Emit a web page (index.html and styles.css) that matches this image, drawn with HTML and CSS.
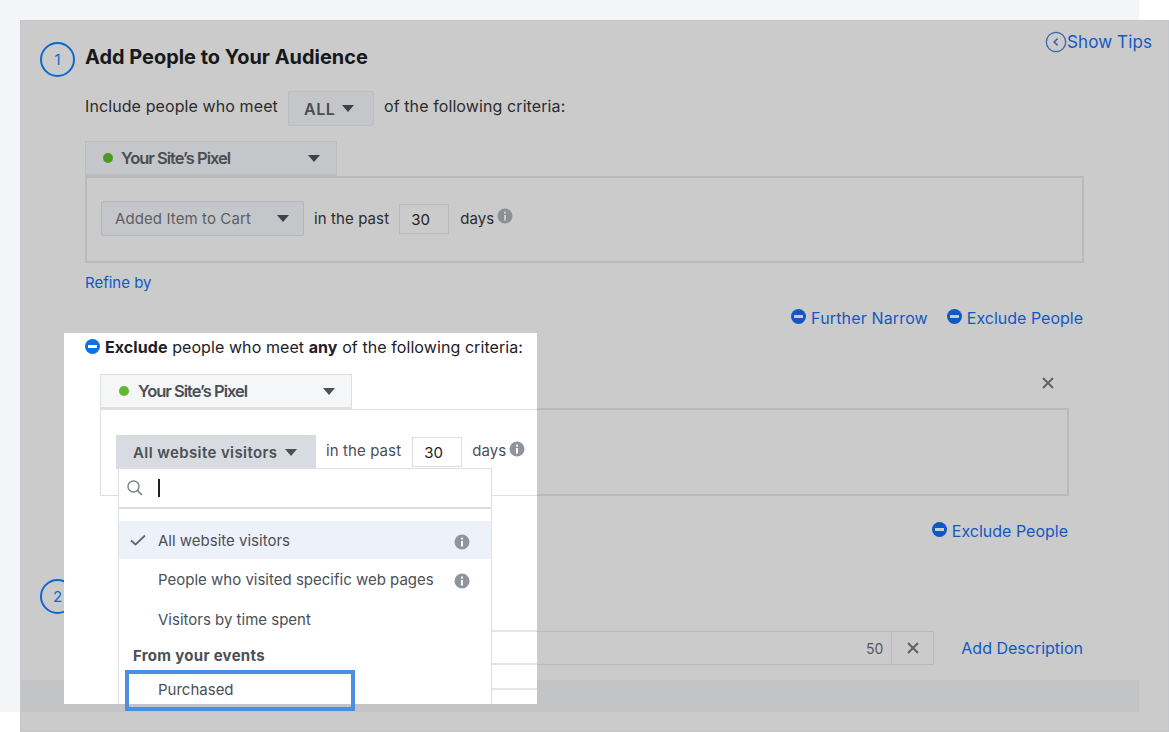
FILE: index.html
```html
<!DOCTYPE html>
<html lang="en">

<head>
    <meta charset="UTF-8">
    <title>Add People to Your Audience</title>
    <link rel="stylesheet" href="styles.css">
</head>

<body>
    <div class="page">
        <div class="panel">
            <a class="show-tips" href="#">
                <svg width="22" height="22" viewBox="0 0 22 22"><circle cx="11" cy="11" r="9.7" fill="none" stroke="#3f63ab" stroke-width="1.3"/><path d="M12.6 7.6 9.2 11l3.4 3.4" fill="none" stroke="#3f63ab" stroke-width="1.6"/></svg>
                Show Tips
            </a>

            <div class="step-head">
                <span class="step-num">1</span>
                <h2>Add People to Your Audience</h2>
            </div>

            <div class="include-row">
                <span class="inc-text">Include people who meet</span>
                <span class="btn-all">ALL <i class="caret"></i></span>
                <span class="inc-text">of the following criteria:</span>
            </div>

            <div class="pixel-tab">
                <span class="dot"></span>
                <span class="pixel-name">Your Site’s Pixel</span>
                <i class="caret"></i>
            </div>
            <div class="rule-box">
                <span class="btn-event">Added Item to Cart <i class="caret"></i></span>
                <span>in the past</span>
                <span class="days-input">30</span>
                <span>days</span>
                <svg class="info" width="16" height="16" viewBox="0 0 16 16"><circle cx="8" cy="8" r="7.5" fill="#8d8f93"/><rect x="7" y="7" width="2" height="5.5" fill="#cbcbcb"/><rect x="7" y="3.6" width="2" height="2" fill="#cbcbcb"/></svg>
            </div>

            <a class="refine" href="#">Refine by</a>

            <div class="link-row">
                <a class="narrow" href="#"><i class="minus"></i>Further Narrow</a>
                <a href="#"><i class="minus"></i>Exclude People</a>
            </div>

            <div class="close-row">
                <svg width="14" height="14" viewBox="0 0 14 14"><path d="M2 2l10 10M12 2 2 12" stroke="#5f6166" stroke-width="1.8"/></svg>
            </div>
            <div class="rule-box exclude-box"></div>

            <div class="link-row second">
                <a href="#"><i class="minus"></i>Exclude People</a>
            </div>

            <div class="step-head two">
                <span class="step-num">2</span>
            </div>

            <div class="name-row">
                <div class="name-input">50</div>
                <div class="name-clear">
                    <svg width="14" height="14" viewBox="0 0 14 14"><path d="M2 2l10 10M12 2 2 12" stroke="#5f6166" stroke-width="2"/></svg>
                </div>
                <a href="#">Add Description</a>
            </div>

            <div class="panel-foot"></div>
        </div>

        <!-- lit part of the page, sits over the grey layer -->
        <div class="spot">
            <div class="exclude-line">
                <i class="minus bright"></i>
                <span><b>Exclude</b> people who meet <b>any</b> of the following criteria:</span>
            </div>
            <div class="pixel-tab lit">
                <span class="dot"></span>
                <span class="pixel-name">Your Site’s Pixel</span>
                <i class="caret"></i>
            </div>
            <div class="lit-box">
                <span class="btn-visitors">All website visitors <i class="caret"></i></span>
                <span class="lit-text">in the past</span>
                <span class="days-input">30</span>
                <span class="lit-text">days</span>
                <svg class="info" width="16" height="16" viewBox="0 0 16 16"><circle cx="8" cy="8" r="7.5" fill="#90949c"/><rect x="7" y="7" width="2" height="5.5" fill="#fff"/><rect x="7" y="3.6" width="2" height="2" fill="#fff"/></svg>
            </div>

            <div class="lit-lines">
                <div class="lit-line one"></div>
                <div class="lit-line two"></div>
                <div class="lit-line three"></div>
            </div>

            <div class="menu">
                <div class="menu-search">
                    <svg width="18" height="18" viewBox="0 0 18 18"><circle cx="7.5" cy="7.5" r="5.5" fill="none" stroke="#7d8087" stroke-width="1.4"/><path d="M11.6 11.6 16 16" stroke="#7d8087" stroke-width="1.6"/></svg>
                    <span class="cursor"></span>
                </div>
                <div class="menu-list">
                    <div class="menu-item selected">
                        <svg class="check" width="16" height="12" viewBox="0 0 16 12"><path d="M1 6.5 5.5 10.5 15 1.5" fill="none" stroke="#62666d" stroke-width="1.8"/></svg>
                        <span>All website visitors</span>
                        <svg class="info" width="16" height="16" viewBox="0 0 16 16"><circle cx="8" cy="8" r="7.5" fill="#90949c"/><rect x="7" y="7" width="2" height="5.5" fill="#fff"/><rect x="7" y="3.6" width="2" height="2" fill="#fff"/></svg>
                    </div>
                    <div class="menu-item tall">
                        <span>People who visited specific web pages</span>
                        <svg class="info" width="16" height="16" viewBox="0 0 16 16"><circle cx="8" cy="8" r="7.5" fill="#90949c"/><rect x="7" y="7" width="2" height="5.5" fill="#fff"/><rect x="7" y="3.6" width="2" height="2" fill="#fff"/></svg>
                    </div>
                    <div class="menu-item tall">
                        <span>Visitors by time spent</span>
                    </div>
                    <div class="menu-group">From your events</div>
                    <div class="menu-item">
                        <span>Purchased</span>
                    </div>
                </div>
            </div>
        </div>

        <div class="highlight"></div>
    </div>
</body>

</html>
```

FILE: styles.css
```css
html, body {
    margin: 0;
    height: 732px;
    overflow: hidden;
    background-color: #fff;
}

body {
    font-family: Inter, "Noto Sans", sans-serif;
    font-size: 15px;
    color: #2b2c2e;
}

a {
    color: #1258c4;
    text-decoration: none;
}

h2 {
    margin: 0;
    padding-bottom: 6px;
    font-size: 19.95px;
    font-weight: 700;
    color: #17181a;
}

.page {
    position: relative;
    width: 1139px;
    height: 712px;
    box-sizing: border-box;
    padding: 20px 0 0 20px;
    background-color: #f4f5f7;
}

.panel {
    position: relative;
    box-sizing: border-box;
    width: 1149px;
    height: 712px;
    padding: 0 0 0 20px;
    background-color: #cbcbcb;
    border: 1px solid #c4c6c9;
}

.show-tips {
    position: absolute;
    top: 10px;
    right: 16px;
    display: flex;
    align-items: center;
    font-size: 17px;
    letter-spacing: 0.1px;
}

.step-head {
    display: flex;
    align-items: center;
    gap: 10px;
    height: 35px;
    margin: 21px 0 0 -1px;
}

.step-num {
    display: flex;
    align-items: center;
    justify-content: center;
    box-sizing: border-box;
    width: 35px;
    height: 35px;
    border: 2.5px solid #0a69cf;
    border-radius: 50%;
    color: #0a69cf;
    font-size: 15px;
}

.include-row {
    display: flex;
    align-items: center;
    gap: 10px;
    margin: 14px 0 0 44px;
    font-size: 16px;
    letter-spacing: 0.1px;
}

.inc-text {
    padding-bottom: 6px;
}

.btn-all {
    display: flex;
    align-items: center;
    gap: 7px;
    box-sizing: border-box;
    width: 86px;
    height: 35px;
    padding: 0 0 0 15px;
    border: 1px solid #bbbdc0;
    background-color: #c5c6c9;
    font-weight: 600;
    letter-spacing: 0.6px;
    color: #4b4d52;
    border-radius: 2px;
}

.caret {
    display: inline-block;
    width: 0;
    height: 0;
    border-left: 6.5px solid transparent;
    border-right: 6.5px solid transparent;
    border-top: 7px solid #3f4146;
}

.pixel-tab {
    display: flex;
    align-items: center;
    box-sizing: border-box;
    width: 252px;
    height: 35px;
    margin: 15px 0 0 44px;
    padding: 0 16px 0 17px;
    border: 1px solid #bbbdc0;
    border-bottom-width: 2px;
    background-color: #c5c6c9;
    color: #4b4d52;
}

.dot {
    width: 10px;
    height: 10px;
    margin-right: 8px;
    border-radius: 50%;
    background-color: #4c9a22;
}

.pixel-name {
    flex: 1;
    font-size: 16.5px;
    font-weight: 600;
    letter-spacing: -1px;
}

.rule-box {
    display: flex;
    align-items: center;
    box-sizing: border-box;
    width: 999px;
    height: 87px;
    margin-left: 44px;
    padding: 0 0 2px 14px;
    border: 2px solid #bababa;
    font-size: 15px;
    letter-spacing: 0.1px;
}

.btn-event {
    display: flex;
    align-items: center;
    justify-content: space-between;
    box-sizing: border-box;
    width: 203px;
    height: 35px;
    margin-right: 10px;
    padding: 0 14px 0 13px;
    border: 1px solid #b4b6b9;
    background-color: #c5c6c9;
    border-radius: 2px;
    font-size: 15px;
    letter-spacing: 0.1px;
    color: #5c5e63;
}

.days-input {
    box-sizing: border-box;
    width: 50px;
    height: 30px;
    margin: 0 11px 0 10px;
    padding: 5px 0 0 11px;
    border: 1px solid #b9babb;
    color: #1f2022;
    font-size: 15px;
}

.info {
    margin: -6px 0 0 3px;
}

.refine {
    display: block;
    margin: 11px 0 0 44px;
    font-size: 15px;
    line-height: 17px;
}

.link-row {
    display: flex;
    justify-content: flex-end;
    gap: 19px;
    width: 1042px;
    margin-top: 17px;
    font-size: 16px;
}

.link-row a {
    display: flex;
    align-items: center;
}

.link-row .narrow {
    letter-spacing: 0.15px;
}

.minus {
    position: relative;
    display: inline-block;
    width: 15px;
    height: 15px;
    margin: -3px 5px 0 0;
    border-radius: 50%;
    background-color: #1258c4;
}

.minus::after {
    content: "";
    position: absolute;
    left: 3px;
    right: 3px;
    top: 6px;
    height: 3px;
    background-color: #cbcbcb;
}

.minus.bright {
    background-color: #0e6fe6;
}

.minus.bright::after {
    background-color: #fff;
}

.close-row {
    width: 1014px;
    height: 14px;
    margin-top: 47px;
    text-align: right;
}

.exclude-box {
    width: 969px;
    height: 88px;
    margin: 19px 0 0 59px;
}

.link-row.second {
    width: 1027px;
    margin-top: 25px;
}

.step-head.two {
    margin-top: 38px;
}

.name-row {
    display: flex;
    align-items: center;
    width: 1042px;
    margin-top: 17px;
    font-size: 16px;
}

.name-input {
    flex: 1;
    box-sizing: border-box;
    height: 34px;
    padding: 8px 8px 0 0;
    margin-left: 44px;
    border: 1px solid #b9babb;
    text-align: right;
    font-size: 14px;
    color: #55575c;
}

.name-clear {
    display: flex;
    align-items: center;
    justify-content: center;
    box-sizing: border-box;
    width: 42px;
    height: 34px;
    margin-right: 27px;
    border: 1px solid #b9babb;
    border-left: 0;
}

.panel-foot {
    position: absolute;
    left: 0;
    top: 659px;
    width: 1118px;
    height: 32px;
    background-color: #c3c4c6;
}

.spot {
    position: absolute;
    left: 64px;
    top: 333px;
    width: 473px;
    height: 371px;
    overflow: hidden;
    background-color: #fff;
    color: #1d2129;
}

.exclude-line {
    display: flex;
    align-items: center;
    margin: 5px 0 0 21px;
    font-size: 16px;
    line-height: 19px;
    letter-spacing: 0.08px;
}

.spot .pixel-tab {
    margin: 17px 0 0 36px;
    padding: 0 16px 0 18px;
    border-color: #dddfe2;
    background-color: #f5f6f7;
    color: #4b4f56;
}

.spot .dot {
    background-color: #5fb82f;
    margin-right: 9px;
}

.spot .caret {
    border-top-color: #4b4f56;
}

.lit-box {
    display: flex;
    align-items: center;
    box-sizing: border-box;
    height: 87px;
    margin-left: 36px;
    padding: 0 0 1px 15px;
    border: 1px solid #dddfe2;
    border-right: 0;
    font-size: 15px;
    letter-spacing: 0.1px;
    color: #4b4f56;
}

.lit-text {
    padding-bottom: 4px;
}

.btn-visitors {
    display: flex;
    align-items: center;
    gap: 8px;
    box-sizing: border-box;
    width: 200px;
    height: 34px;
    margin-right: 10px;
    padding: 0 17px;
    background-color: #d8dbe0;
    font-size: 15px;
    font-weight: 600;
    letter-spacing: 0.4px;
    color: #4b4f56;
}

.lit-box .days-input {
    margin: 0 10px 0 11px;
    border-color: #dddfe2;
    background-color: #fff;
    color: #1d2129;
}

.lit-lines {
    position: absolute;
    left: 0;
    right: 0;
    top: 0;
}

.lit-line {
    position: absolute;
    left: 427px;
    right: 0;
    height: 2px;
    background-color: #e4e5e9;
}

.lit-line.one { top: 297px; }
.lit-line.two { top: 330px; }
.lit-line.three { top: 355px; }

.menu {
    position: absolute;
    left: 54px;
    top: 135px;
    box-sizing: border-box;
    width: 374px;
    height: 240px;
    border: 1px solid #dddfe2;
    background-color: #fff;
}

.menu-search {
    display: flex;
    align-items: center;
    box-sizing: border-box;
    height: 40px;
    padding-left: 7px;
    border-bottom: 2px solid #dddfe2;
}

.cursor {
    width: 2px;
    height: 18px;
    margin-left: 14px;
    background-color: #1d2129;
}

.menu-list {
    padding-top: 12px;
}

.menu-item {
    display: flex;
    align-items: center;
    height: 38px;
    padding: 0 21px 0 39px;
    position: relative;
    font-size: 15px;
    color: #4b4f56;
}

.menu-item.tall {
    height: 40px;
}

.menu-item span {
    flex: 1;
}

.menu-item .info {
    margin: 4px 0 0 0;
}

.menu-item.selected {
    background-color: #edf2fa;
}

.check {
    position: absolute;
    left: 11px;
    top: 13px;
}

.menu-group {
    margin: 8px 0 6px 14px;
    font-size: 15px;
    line-height: 17px;
    font-weight: 700;
    letter-spacing: 0.3px;
    color: #4b4f56;
}

.highlight {
    position: absolute;
    left: 125px;
    top: 670px;
    box-sizing: border-box;
    width: 230px;
    height: 41px;
    border: 4px solid #4a90e2;
}
```
